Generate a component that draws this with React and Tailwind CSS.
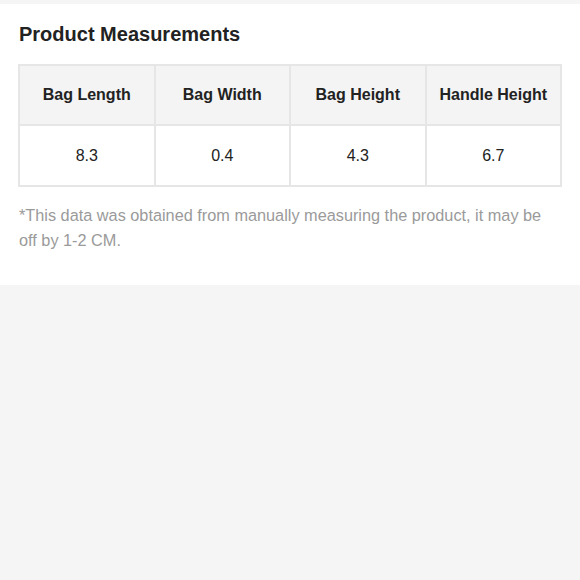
export default function App() {
  const cols = [
    { label: 'Bag Length', value: '8.3' },
    { label: 'Bag Width', value: '0.4' },
    { label: 'Bag Height', value: '4.3' },
    { label: 'Handle Height', value: '6.7' },
  ];

  return (
    <div className="w-[580px] h-[580px] bg-[#f5f5f5] flex flex-col font-['Liberation_Sans',Arial,sans-serif]">
      <div className="h-[4px] shrink-0" />
      <div className="bg-white px-[18px] pt-[18px] pb-[32px]">
        <h2 className="text-[20px] leading-[24px] font-bold text-[#222] pl-[1px]">Product Measurements</h2>
        <table className="mt-[18px] w-[544px] border-collapse table-fixed">
          <thead>
            <tr>
              {cols.map((c) => (
                <th key={c.label} className="h-[60px] bg-[#f4f4f4] border-2 border-[#e6e6e6] text-[16px] font-bold text-[#222] text-center">
                  {c.label}
                </th>
              ))}
            </tr>
          </thead>
          <tbody>
            <tr>
              {cols.map((c) => (
                <td key={c.label} className="h-[61px] border-2 border-[#e6e6e6] text-[16px] text-[#222] text-center">
                  {c.value}
                </td>
              ))}
            </tr>
          </tbody>
        </table>
        <p className="mt-[16px] text-[16.3px] leading-[25px] text-[#9a9a9a] pl-[1px]">
          *This data was obtained from manually measuring the product, it may be off by 1-2 CM.
        </p>
      </div>
      <div className="flex-1" />
    </div>
  );
}
